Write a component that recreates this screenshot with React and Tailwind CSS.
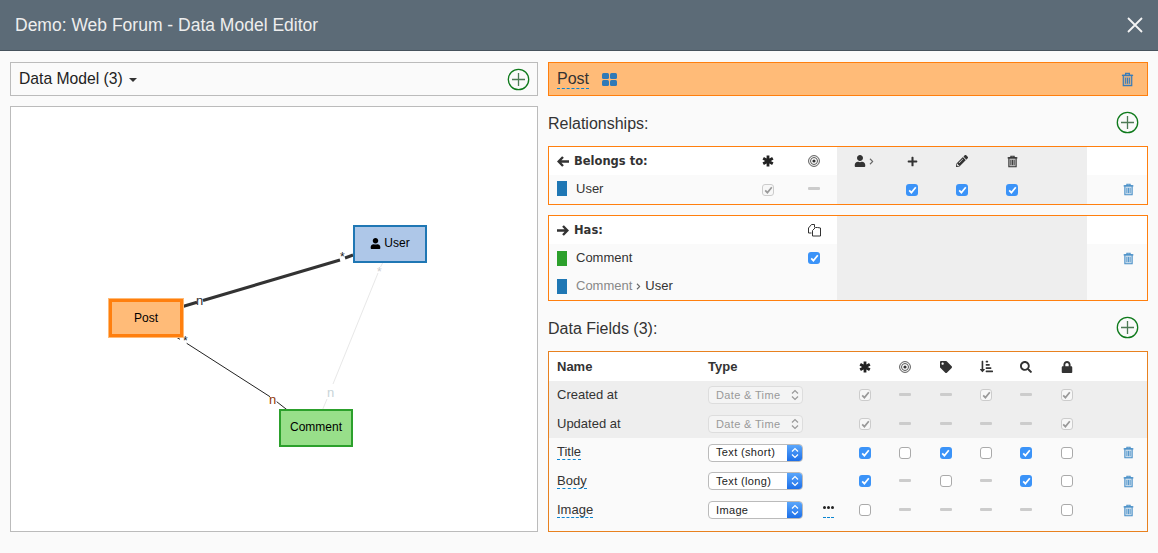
import React from "react";
import { FaUser, FaPlus, FaPencilAlt, FaTag, FaSearch, FaLock, FaSortAmountDownAlt, FaChevronRight } from "react-icons/fa";

const TrashIcon = ({ size = 13, className = "" }) => (
  <svg width={size} height={size} viewBox="0 0 14 16" className={className} fill="none" stroke="currentColor">
    <path d="M1 3.5h12M5 3.5V1.5h4v2" strokeWidth="1.4" />
    <path d="M2.5 3.5v11h9v-11z" strokeWidth="1.3" fill="currentColor" fillOpacity="0.25" />
    <path d="M5 6v6.5M7 6v6.5M9 6v6.5" strokeWidth="1.1" />
  </svg>
);

const AddButton = () => (
  <svg width="23" height="23" viewBox="0 0 23 23" fill="none">
    <circle cx="11.5" cy="11.5" r="10.2" stroke="#0f7a1c" strokeWidth="1.3" />
    <path d="M11.5 5v13M5 11.5h13" stroke="#4d7a55" strokeWidth="1.3" />
  </svg>
);

const AsteriskIcon = () => (
  <svg width="12" height="12" viewBox="0 0 12 12" fill="none" stroke="#222" strokeWidth="2.8">
    <path d="M6 .5v11M1.2 3.2l9.6 5.6M10.8 3.2L1.2 8.8" />
  </svg>
);

const ArrowIcon = ({ flip }) => (
  <svg width="12" height="11" viewBox="0 0 12 11" fill="none" stroke="#333" strokeWidth="2.4" className={flip ? "-scale-x-100" : ""}>
    <path d="M6 1L1.6 5.5L6 10M2 5.5h10" />
  </svg>
);

const GridIcon = () => (
  <svg width="15" height="13" viewBox="0 0 15 13" fill="#2f7ab8">
    <rect x="0" y="0" width="7" height="6" rx="1.5" />
    <rect x="8" y="0" width="7" height="6" rx="1.5" />
    <rect x="0" y="7" width="7" height="6" rx="1.5" />
    <rect x="8" y="7" width="7" height="6" rx="1.5" />
  </svg>
);

const TargetIcon = () => (
  <svg width="12" height="12" viewBox="0 0 12 12" fill="none" stroke="#444">
    <circle cx="6" cy="6" r="5.4" strokeWidth="0.9" />
    <circle cx="6" cy="6" r="3.5" strokeWidth="0.9" />
    <circle cx="6" cy="6" r="1.6" fill="#333" stroke="none" />
  </svg>
);

const CopyIcon = () => (
  <svg width="15" height="14" viewBox="0 0 15 14" fill="none" stroke="#333" strokeWidth="1">
    <path d="M4.5 1.5h3v3M4.5 1.5L1.5 5v5h3" />
    <path d="M8.5 4.5h2l3 .5v8H5.5V7.5z" />
  </svg>
);

const Check = ({ color }) => (
  <svg width="9" height="8" viewBox="0 0 9 8" fill="none">
    <path d="M1.2 4.3L3.4 6.6L7.8 1.2" stroke={color} strokeWidth="1.7" />
  </svg>
);

// on: blue, off: empty, locked: grey with tick, none: dash
const Box = ({ state }) => {
  if (state === "on")
    return (
      <span className="flex h-3 w-3 items-center justify-center rounded-[3px] bg-[#3b93f8]">
        <Check color="#fff" />
      </span>
    );
  if (state === "off") return <span className="h-3 w-3 rounded-[3px] border border-[#aaa] bg-white" />;
  if (state === "locked")
    return (
      <span className="flex h-3 w-3 items-center justify-center rounded-[3px] border border-[#ccc] bg-[#f7f7f7]">
        <Check color="#999" />
      </span>
    );
  if (state === "none") return <span className="mb-[2px] h-[3px] w-3 rounded-[1px] bg-[#ccc]" />;
  return null;
};

const Select = ({ label, disabled }) => (
  <div
    className={`flex h-[18px] w-[95px] items-center justify-between overflow-hidden rounded-[4px] border text-[11px] tracking-[0.35px] ${
      disabled ? "border-[#ddd] bg-[#f4f4f4] text-[#999]" : "border-[#bbb] bg-white text-[#222]"
    }`}
  >
    <span className="pl-[7px]">{label}</span>
    <span
      className={`flex h-full w-[15px] items-center justify-center ${
        disabled ? "" : "bg-gradient-to-b from-[#5aa6fb] to-[#1c6fe8]"
      }`}
    >
      <svg width="8" height="12" viewBox="0 0 8 12" fill="none" stroke={disabled ? "#999" : "#fff"} strokeWidth="1.2">
        <path d="M1 4.5L4 1.5L7 4.5M1 7.5L4 10.5L7 7.5" />
      </svg>
    </span>
  </div>
);

const Dashed = ({ children }) => (
  <span className="border-b border-dashed border-[#0a85d1] leading-[15px]">{children}</span>
);

const Cell = ({ children, className = "w-[40.3px]" }) => (
  <div className={`flex h-full shrink-0 items-center justify-center ${className}`}>{children}</div>
);

const ColorBar = ({ color }) => <span className={`mr-[9px] h-[15px] w-[10px] ${color}`} />;

const DataFieldRow = ({ name, type, flags, gray, linked, dots, removable }) => (
  <div className={`flex h-[28.7px] items-center text-[13px] text-[#333] ${gray ? "bg-[#eee]" : "bg-[#fafafa]"}`}>
    <div className="-mt-[1px] w-[159px] shrink-0 pl-2">{linked ? <Dashed>{name}</Dashed> : name}</div>
    <div className="flex w-[137px] shrink-0 items-center">
      <Select label={type} disabled={gray} />
      {dots && (
        <span className="ml-[20px] flex h-[15px] w-[11px] items-start justify-center gap-[1px] border-b border-dashed border-[#0a85d1] pt-[3px]">
          <i className="h-[3px] w-[3px] rounded-full bg-[#222]" />
          <i className="h-[3px] w-[3px] rounded-full bg-[#222]" />
          <i className="h-[3px] w-[3px] rounded-full bg-[#222]" />
        </span>
      )}
    </div>
    {flags.map((f, i) => (
      <Cell key={i}>
        <Box state={f} />
      </Cell>
    ))}
    <div className="flex flex-1 justify-end pr-[12px] text-[#4a90c8]">{removable && <TrashIcon />}</div>
  </div>
);

const App = () => {
  return (
    <div className="flex h-[553px] w-[1158px] flex-col overflow-hidden bg-[#fafafa] font-['Liberation_Sans',Arial,sans-serif] text-[#333]">
      <div className="flex h-[51px] shrink-0 items-center justify-between border-b border-[#46525c] bg-[#5c6b77] pl-[15px] pr-[14px]">
        <span className="text-[17.5px] text-[#eee]">Demo: Web Forum - Data Model Editor</span>
        <svg width="18" height="18" viewBox="0 0 18 18" stroke="#f4f4f4" strokeWidth="1.8">
          <path d="M2 2l14 14M16 2L2 16" />
        </svg>
      </div>

      <div className="flex flex-1 gap-[10px] px-[10px] pt-[11px]">
        {/* Diagram */}
        <div className="flex w-[528px] flex-col gap-[10px]">
          <div className="flex h-[34px] items-center justify-between border border-[#bbb] bg-[#fafafa] pl-2 pr-[7px]">
            <span className="flex items-center text-[15.7px] text-[#222]">
              Data Model (3)
              <span className="ml-[6px] mt-[2px] h-0 w-0 border-x-[4px] border-t-[4px] border-x-transparent border-t-[#333]" />
            </span>
            <AddButton />
          </div>
          <div className="relative h-[426px] border border-[#bbb] bg-white text-[12px] text-black">
            <svg className="absolute left-0 top-0" width="526" height="424" fill="none">
              <path d="M171 199.7L186 195.3M192 193.5L329 153M334 151L342 148" stroke="#333" strokeWidth="3" />
              <path d="M163.3 229L169 232.3M175.7 236.3L259 289.7M265.7 294.7L276.3 303" stroke="#222" strokeWidth="1" />
              <path d="M311.7 302.3L316 292M322 277L367 166M369.5 160L372.3 154.7" stroke="#e8e8e8" strokeWidth="1" />
            </svg>
            <span className="absolute left-[185px] top-[184px] text-[13px] text-[#333]">n</span>
            <span className="absolute left-[329px] top-[141px] text-[#222]">*</span>
            <span className="absolute left-[172px] top-[225px] text-[#222]">*</span>
            <span className="absolute left-[258px] top-[283px] text-[13px] text-[#8f3a08]">n</span>
            <span className="absolute left-[316px] top-[276px] text-[13px] text-[#c8d4d8]">n</span>
            <span className="absolute left-[366px] top-[156px] text-[#ccc]">*</span>

            <div className="absolute left-[342px] top-[118px] flex h-[38px] w-[74px] items-center justify-center gap-[3px] border-2 border-[#1f77b4] bg-[#aec7e8] pb-[2px]">
              <FaUser size={11} />
              User
            </div>
            <div className="absolute left-[98px] top-[192px] flex h-[38px] w-[74px] items-center justify-center border-[3px] border-[#ff7f0e] bg-[#ffbb78] pb-[1px] outline-1 outline-[#ffbb78]">
              Post
            </div>
            <div className="absolute left-[268px] top-[302px] flex h-[38px] w-[74px] items-center justify-center border-2 border-[#2ca02c] bg-[#98df8a] pb-[2px]">
              Comment
            </div>
          </div>
        </div>

        {/* Entity details */}
        <div className="flex w-[600px] flex-col">
          <div className="flex h-[34px] shrink-0 items-center justify-between border border-[#ff7f0e] bg-[#ffbb78] pl-2 pr-[12px]">
            <span className="flex items-center gap-[13px] text-[16px] text-[#333]">
              <span className="border-b border-dashed border-[#0a85d1] leading-[19px]">Post</span>
              <GridIcon />
            </span>
            <TrashIcon size={15} className="text-[#3a7cb8]" />
          </div>

          <div className="flex h-[50px] shrink-0 items-center justify-between pr-[9px] pt-[3px] text-[16px] text-[#333]">
            <span className="mt-[3px]">Relationships:</span>
            <AddButton />
          </div>

          <div className="h-[59px] shrink-0 border border-[#ff7f0e] text-[13px]">
            <div className="flex h-[28px] items-center bg-white">
              <div className="flex w-[196px] shrink-0 items-center gap-[5px] pl-2 font-['DejaVu_Sans',sans-serif] text-[11.5px] font-bold text-[#333]">
                <ArrowIcon />
                <span className="mt-[1px]">Belongs to:</span>
              </div>
              <Cell className="w-[46px]"><AsteriskIcon /></Cell>
              <Cell className="w-[46px]"><TargetIcon /></Cell>
              <div className="flex h-full w-[250px] shrink-0 items-center bg-[#eee] text-[#333]">
                <Cell className="w-[50px] pl-[4px]">
                  <FaUser size={12} />
                  <FaChevronRight size={7} className="ml-[2px] text-[#666]" />
                </Cell>
                <Cell className="w-[50px]"><FaPlus size={11} /></Cell>
                <Cell className="w-[50px]"><FaPencilAlt size={12} /></Cell>
                <Cell className="w-[50px]"><TrashIcon size={13} /></Cell>
              </div>
            </div>
            <div className="flex h-[29px] items-center bg-[#fafafa]">
              <div className="-mt-[2px] flex w-[196px] shrink-0 items-center pl-2">
                <ColorBar color="bg-[#1f77b4]" />
                User
              </div>
              <Cell className="w-[46px]"><Box state="locked" /></Cell>
              <Cell className="w-[46px]"><Box state="none" /></Cell>
              <div className="flex h-full w-[250px] shrink-0 items-center bg-[#eee]">
                <Cell className="w-[50px]" />
                <Cell className="w-[50px]"><Box state="on" /></Cell>
                <Cell className="w-[50px]"><Box state="on" /></Cell>
                <Cell className="w-[50px]"><Box state="on" /></Cell>
              </div>
              <div className="flex flex-1 justify-end pr-[12px] text-[#4a90c8]"><TrashIcon /></div>
            </div>
          </div>

          <div className="mt-[10px] h-[86px] shrink-0 border border-[#ff7f0e] text-[13px]">
            <div className="flex h-[28px] items-center bg-white">
              <div className="flex w-[242px] shrink-0 items-center gap-[5px] pl-2 font-['DejaVu_Sans',sans-serif] text-[11.5px] font-bold text-[#333]">
                <ArrowIcon flip />
                <span className="mt-[1px]">Has:</span>
              </div>
              <Cell className="w-[46px]"><CopyIcon /></Cell>
              <div className="h-full w-[250px] shrink-0 bg-[#eee]" />
            </div>
            <div className="flex h-[28px] items-center bg-[#fafafa]">
              <div className="flex w-[242px] shrink-0 items-center pl-2">
                <ColorBar color="bg-[#2ca02c]" />
                Comment
              </div>
              <Cell className="w-[46px]"><Box state="on" /></Cell>
              <div className="h-full w-[250px] shrink-0 bg-[#eee]" />
              <div className="flex flex-1 justify-end pr-[12px] text-[#4a90c8]"><TrashIcon /></div>
            </div>
            <div className="flex h-[28px] items-center bg-[#fafafa]">
              <div className="flex w-[288px] shrink-0 items-center pl-2">
                <ColorBar color="bg-[#1f77b4]" />
                <span className="text-[#888]">Comment</span>
                <FaChevronRight size={7} className="mx-[3px] text-[#666]" />
                User
              </div>
              <div className="h-full w-[250px] shrink-0 bg-[#eee]" />
            </div>
          </div>

          <div className="flex h-[50px] shrink-0 items-center justify-between pr-[9px] pt-[3px] text-[16px] text-[#333]">
            <span className="mt-[3px]">Data Fields (3):</span>
            <AddButton />
          </div>

          <div className="h-[181px] shrink-0 border border-[#e8811f] bg-[#fafafa]">
            <div className="flex h-[29px] items-center bg-white text-[13px] font-bold text-[#333]">
              <div className="w-[159px] shrink-0 pl-2">Name</div>
              <div className="w-[137px] shrink-0">Type</div>
              <Cell><AsteriskIcon /></Cell>
              <Cell><TargetIcon /></Cell>
              <Cell><FaTag size={12} /></Cell>
              <Cell><FaSortAmountDownAlt size={13} /></Cell>
              <Cell><FaSearch size={12} /></Cell>
              <Cell><FaLock size={12} /></Cell>
            </div>
            <DataFieldRow gray name="Created at" type="Date & Time" flags={["locked", "none", "none", "locked", "none", "locked"]} />
            <DataFieldRow gray name="Updated at" type="Date & Time" flags={["locked", "none", "none", "none", "none", "locked"]} />
            <DataFieldRow linked removable name="Title" type="Text (short)" flags={["on", "off", "on", "off", "on", "off"]} />
            <DataFieldRow linked removable name="Body" type="Text (long)" flags={["on", "none", "off", "none", "on", "off"]} />
            <DataFieldRow linked removable dots name="Image" type="Image" flags={["off", "none", "none", "none", "none", "off"]} />
          </div>
        </div>
      </div>
    </div>
  );
};

export default App;
